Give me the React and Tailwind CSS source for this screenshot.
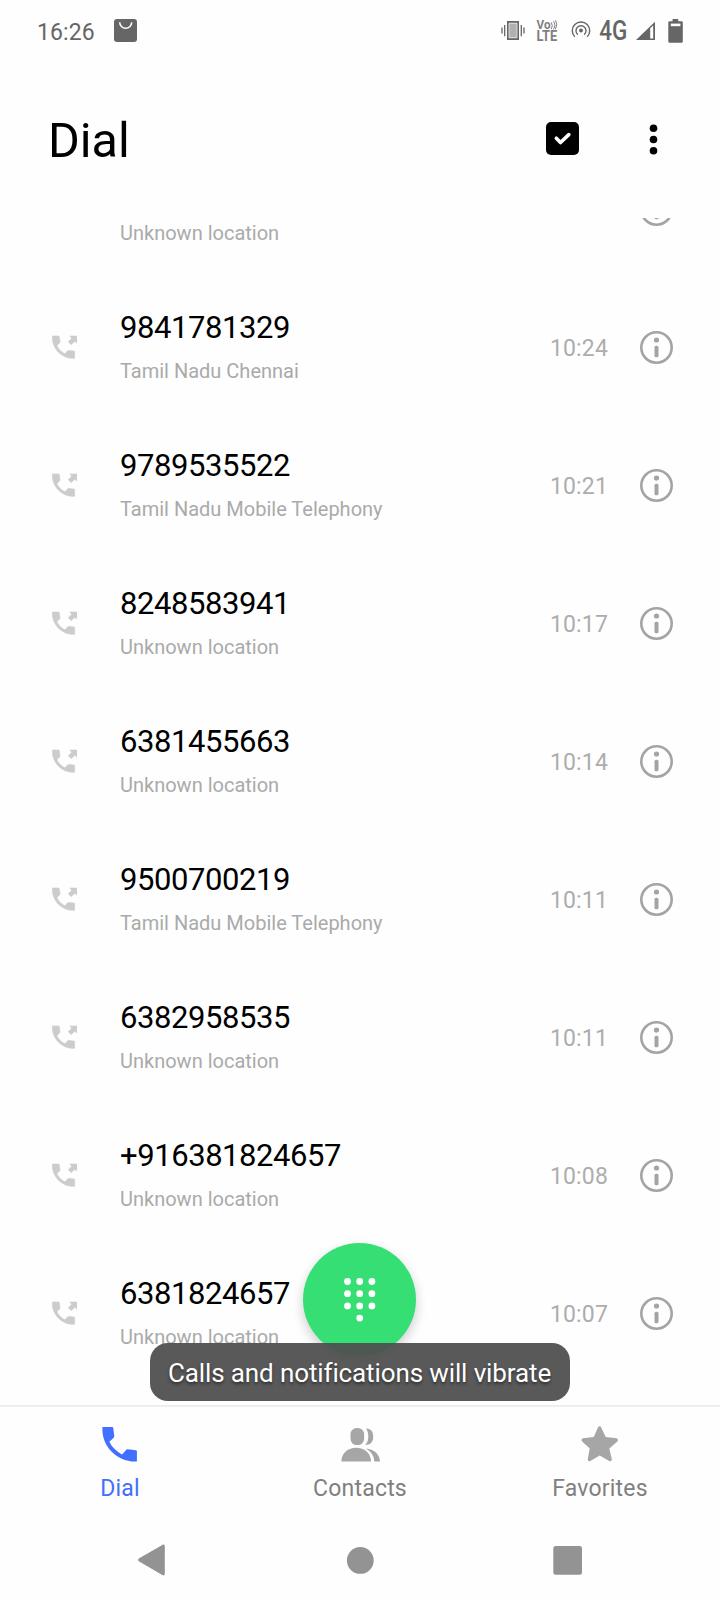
const calls = [
    { location: 'Unknown location', time: '10:26' },
    { number: '9841781329', location: 'Tamil Nadu Chennai', time: '10:24' },
    { number: '9789535522', location: 'Tamil Nadu Mobile Telephony', time: '10:21' },
    { number: '8248583941', location: 'Unknown location', time: '10:17' },
    { number: '6381455663', location: 'Unknown location', time: '10:14' },
    { number: '9500700219', location: 'Tamil Nadu Mobile Telephony', time: '10:11' },
    { number: '6382958535', location: 'Unknown location', time: '10:11' },
    { number: '+916381824657', location: 'Unknown location', time: '10:08' },
    { number: '6381824657', location: 'Unknown location', time: '10:07' },
];

const PHONE_PATH =
    'M21 15.7c0-.3-.2-.5-.5-.55l-4.3-.5c-.3 0-.6.05-.8.3l-2.2 2.4c-2.83-1.44-5.15-3.75-6.59-6.59l2.3-2.2c.2-.2.3-.5.3-.8l-.55-4.2c-.05-.35-.3-.56-.6-.56H3.03C2.45 13.18 10.82 21.55 21 20.97z';

function StatusBar() {
    return (
        <div className="flex h-[62px] items-center justify-between pl-[37px] pr-[37px] text-[#666666]">
            <div className="flex items-center">
                <span className="w-[77px] pt-1 text-[23px] leading-6 tracking-[0.1px]">16:26</span>
                <svg className="h-6 w-6" viewBox="0 0 24 24">
                    <rect x="0" y="0" width="23" height="23" rx="3" fill="currentColor" />
                    <path d="M5.7 3.2a6 6 0 0 0 12 0" fill="none" stroke="#fff" strokeWidth="1.5" />
                </svg>
            </div>
            <div className="flex items-center">
                <svg className="mr-[11px] h-6 w-6" viewBox="0 0 24 24">
                    <rect x="6.9" y="2.9" width="10.2" height="17.2" fill="#b0b0b0" stroke="currentColor" strokeWidth="1.8" />
                    <path d="M8 4.3h8v14.4H8z" fill="none" stroke="#fff" strokeWidth="0.6" />
                    <path d="M1 8.5v6M3.7 6v11.2M20.3 6v11.2M23 8.5v6" stroke="currentColor" strokeWidth="1.3" />
                </svg>
                <svg className="mr-[13px] h-6 w-[22px] overflow-visible" viewBox="0 0 22 24" fill="#808080">
                    <text x="0.5" y="10.4" textLength="14" lengthAdjust="spacingAndGlyphs" className="font-['Roboto'] text-[12.5px] font-bold">Vo</text>
                    <path d="M15.3 3.5q2 3.2 0 6.6M17.6 2.2q2.8 4.2 0 8.2M19.600 1.2q2.4 4.6-.2 9" fill="none" stroke="#808080" strokeWidth="1" />
                    <text x="0.4" y="22.3" textLength="20.8" lengthAdjust="spacingAndGlyphs" className="font-['Roboto'] text-[14px] font-bold">LTE</text>
                </svg>
                <svg className="mr-2 h-6 w-5" viewBox="0 0 20 24" fill="none" stroke="currentColor" strokeWidth="1.4">
                    <circle cx="10" cy="11.6" r="2" fill="currentColor" stroke="none" />
                    <path d="M6.8 15.6a5 5 0 1 1 6.4 0" />
                    <path d="M3.8 17.8a8.7 8.7 0 1 1 12.4 0" />
                </svg>
                <svg className="mr-2 h-6 w-[29px] overflow-visible" viewBox="0 0 29 24" fill="currentColor">
                    <text x="0.3" y="21.3" textLength="28" lengthAdjust="spacingAndGlyphs" className="font-['Roboto'] text-[27px] font-medium">4G</text>
                </svg>
                <svg className="mr-3 h-6 w-5" viewBox="0 0 20 24">
                    <path d="M0 21 19 2.8V21z" fill="currentColor" />
                    <path d="M14.2 9.2l3-2.8v13h-3z" fill="#fff" />
                </svg>
                <svg className="h-6 w-[15px]" viewBox="0 0 15 24">
                    <path d="M4.6 0h5.6v2.2h3.3a1.3 1.3 0 0 1 1.3 1.3v19a1.3 1.3 0 0 1-1.3 1.3H1.6A1.3 1.3 0 0 1 .3 22.5v-19a1.3 1.3 0 0 1 1.3-1.3h3z" fill="currentColor" />
                    <rect x="2.8" y="4.6" width="9.6" height="2.6" fill="#fff" />
                </svg>
            </div>
        </div>
    );
}

function Header() {
    return (
        <header className="flex h-[156px] shrink-0 items-center pl-12 pr-[54px]">
            <h1 className="flex-1 pt-[2px] text-[48.5px] leading-[56px] text-black">Dial</h1>
            <svg className="mb-[3px] mr-[62px] h-[33px] w-[33px]" viewBox="0 0 33 33">
                <rect width="33" height="33" rx="5" fill="#000" />
                <path d="m10.3 16.2 4.2 4.3 8.3-7.9" fill="none" stroke="#fff" strokeWidth="3.6" strokeLinecap="round" strokeLinejoin="round" />
            </svg>
            <svg className="mb-px h-[34px] w-[25px]" viewBox="0 0 25 34">
                <circle cx="12.5" cy="5.3" r="3.8" />
                <circle cx="12.5" cy="16.5" r="3.8" />
                <circle cx="12.5" cy="27.7" r="3.8" />
            </svg>
        </header>
    );
}

function CallRow({ number, location, time }) {
    return (
        <li className="flex h-[138px] items-center pl-[52px] pr-[47px]">
            <svg className="mr-[42px] h-[26px] w-[26px]" viewBox="0 0 26 26" fill="#cccccc">
                {number && (
                    <>
                        <path d={PHONE_PATH} transform="translate(-3.4 -1.7) scale(1.24)" stroke="#cccccc" strokeWidth="0.5" />
                        <path d="M17.3 1.8H25v7.6l-2.2-2-3.6 3.5-3.2-3.2 3.5-3.5z" />
                    </>
                )}
            </svg>
            <div className="flex flex-1 flex-col gap-[9px] pb-px">
                <span className="h-10 text-[31px] leading-10 tracking-[-0.43px] text-black">{number}</span>
                <span className="text-[20px] leading-7 text-[#aaaaaa]">{location}</span>
            </div>
            <span className="mr-[31px] pt-1 text-[23px] leading-7 tracking-[0.15px] text-[#adadad]">{time}</span>
            <svg className="mt-px h-[34px] w-[34px]" viewBox="0 0 34 34" fill="#a4a4a4">
                <circle cx="17.5" cy="16.5" r="15.2" fill="none" stroke="#a4a4a4" strokeWidth="2.6" />
                <circle cx="17.5" cy="9" r="2.6" />
                <rect x="15.5" y="14.7" width="4" height="11.6" rx="1.6" />
            </svg>
        </li>
    );
}

function Keypad() {
    const dots = [[0, 0], [1, 0], [2, 0], [0, 1], [1, 1], [2, 1], [0, 2], [1, 2], [2, 2], [1, 3]];

    return (
        <button className="absolute left-[303px] top-[1243px] flex h-[113px] w-[113px] items-center justify-center rounded-full bg-[#35df74] shadow-[0_5px_12px_rgba(0,0,0,0.2)]">
            <svg className="h-[46px] w-[34px]" viewBox="0 0 34 46" fill="#fff">
                {dots.map(([x, y]) => (
                    <circle key={`${x}-${y}`} cx={4.5 + x * 12.2} cy={4.5 + y * 12.2} r="3.4" />
                ))}
            </svg>
        </button>
    );
}

function Tab({ label, active, children }) {
    return (
        <button className={`flex flex-1 flex-col items-center pt-[17px] ${active ? 'text-[#426fff]' : 'text-[#a6a6a6]'}`}>
            <svg className="h-10 w-10" viewBox="0 0 40 40" fill="currentColor">
                {children}
            </svg>
            <span className={`mt-[11px] text-[23px] leading-7 tracking-[0.2px] ${active ? 'text-[#426fff]' : 'text-[#808080]'}`}>
                {label}
            </span>
        </button>
    );
}

function SystemNav() {
    return (
        <div className="flex h-[80px] items-center pl-[138px] text-[#939393]">
            <svg className="mr-[180px] h-8 w-7" viewBox="0 0 28 32" fill="currentColor">
                <path d="M1.2 14.2 24.3.9c1.3-.7 2.5-.1 2.5 1.3v27.6c0 1.4-1.2 2-2.5 1.3L1.2 17.6c-1.4-.8-1.4-2.6 0-3.4z" />
            </svg>
            <svg className="mr-[179px] h-7 w-7" viewBox="0 0 28 28" fill="currentColor">
                <circle cx="14.3" cy="14.4" r="13.4" />
            </svg>
            <svg className="h-[30px] w-[30px]" viewBox="0 0 30 30" fill="currentColor">
                <rect x="0.3" y="1" width="28.7" height="28.7" rx="2.5" />
            </svg>
        </div>
    );
}

export default function App() {
    return (
        <div className="relative flex h-[1600px] w-[720px] flex-col overflow-hidden bg-[#fefefe] font-['Roboto',sans-serif]">
            <StatusBar />
            <Header />

            <main className="min-h-0 flex-1 overflow-hidden">
                {/* scrolled so that the first row is partly hidden */}
                <ul className="-mt-[78px]">
                    {calls.map((call) => (
                        <CallRow key={call.time + call.number} {...call} />
                    ))}
                </ul>
            </main>

            <nav className="flex h-[115px] shrink-0 border-t-2 border-[#eeeeee]">
                <Tab label="Dial" active>
                    <path d={PHONE_PATH} transform="translate(-3.4 -2.8) scale(1.92)" />
                </Tab>
                <Tab label="Contacts">
                    <rect x="10.5" y="4" width="13.6" height="17" rx="6.3" />
                    <path d="M25.8 4.6c5 0 7.4 2.9 7.4 8.1 0 5-2.4 8.2-8.2 8.3 2.2-1.7 3.3-4.6 3.3-8.4 0-3.4-.8-6.3-2.5-8z" />
                    <path d="M1.3 37.4C1.6 29 8 23.8 16.2 23.8S30.8 29 31 37.4z" />
                    <path d="M25.8 24.4c8.3.6 13.9 5.6 14.2 13h-5.7c-.2-5.8-3.2-9.8-8.5-13z" />
                </Tab>
                <Tab label="Favorites">
                    <path d="M18 3.5c.7-1.6 2.5-1.6 3.2 0l4.5 9.6 10.7 1.2c1.7.2 2.1 2 .9 3.1l-8 7.2 2.5 10.5c.3 1.7-1.2 2.7-2.6 1.8L19.7 31.4l-9.4 5.5c-1.4.8-2.8-.1-2.5-1.8l1.9-10.5-7.5-7.2c-1.2-1.2-.8-2.9.9-3.1l10.6-1.2z" />
                </Tab>
            </nav>
            <SystemNav />

            <Keypad />
            <div className="absolute left-[150px] top-[1343px] flex h-[58px] w-[420px] items-center justify-center rounded-[18px] bg-[#505050]/95 pr-px pt-[3px] text-[26px] tracking-[-0.12px] text-white [text-shadow:0_2px_3px_rgba(0,0,0,0.5)]">
                Calls and notifications will vibrate
            </div>
        </div>
    );
}
